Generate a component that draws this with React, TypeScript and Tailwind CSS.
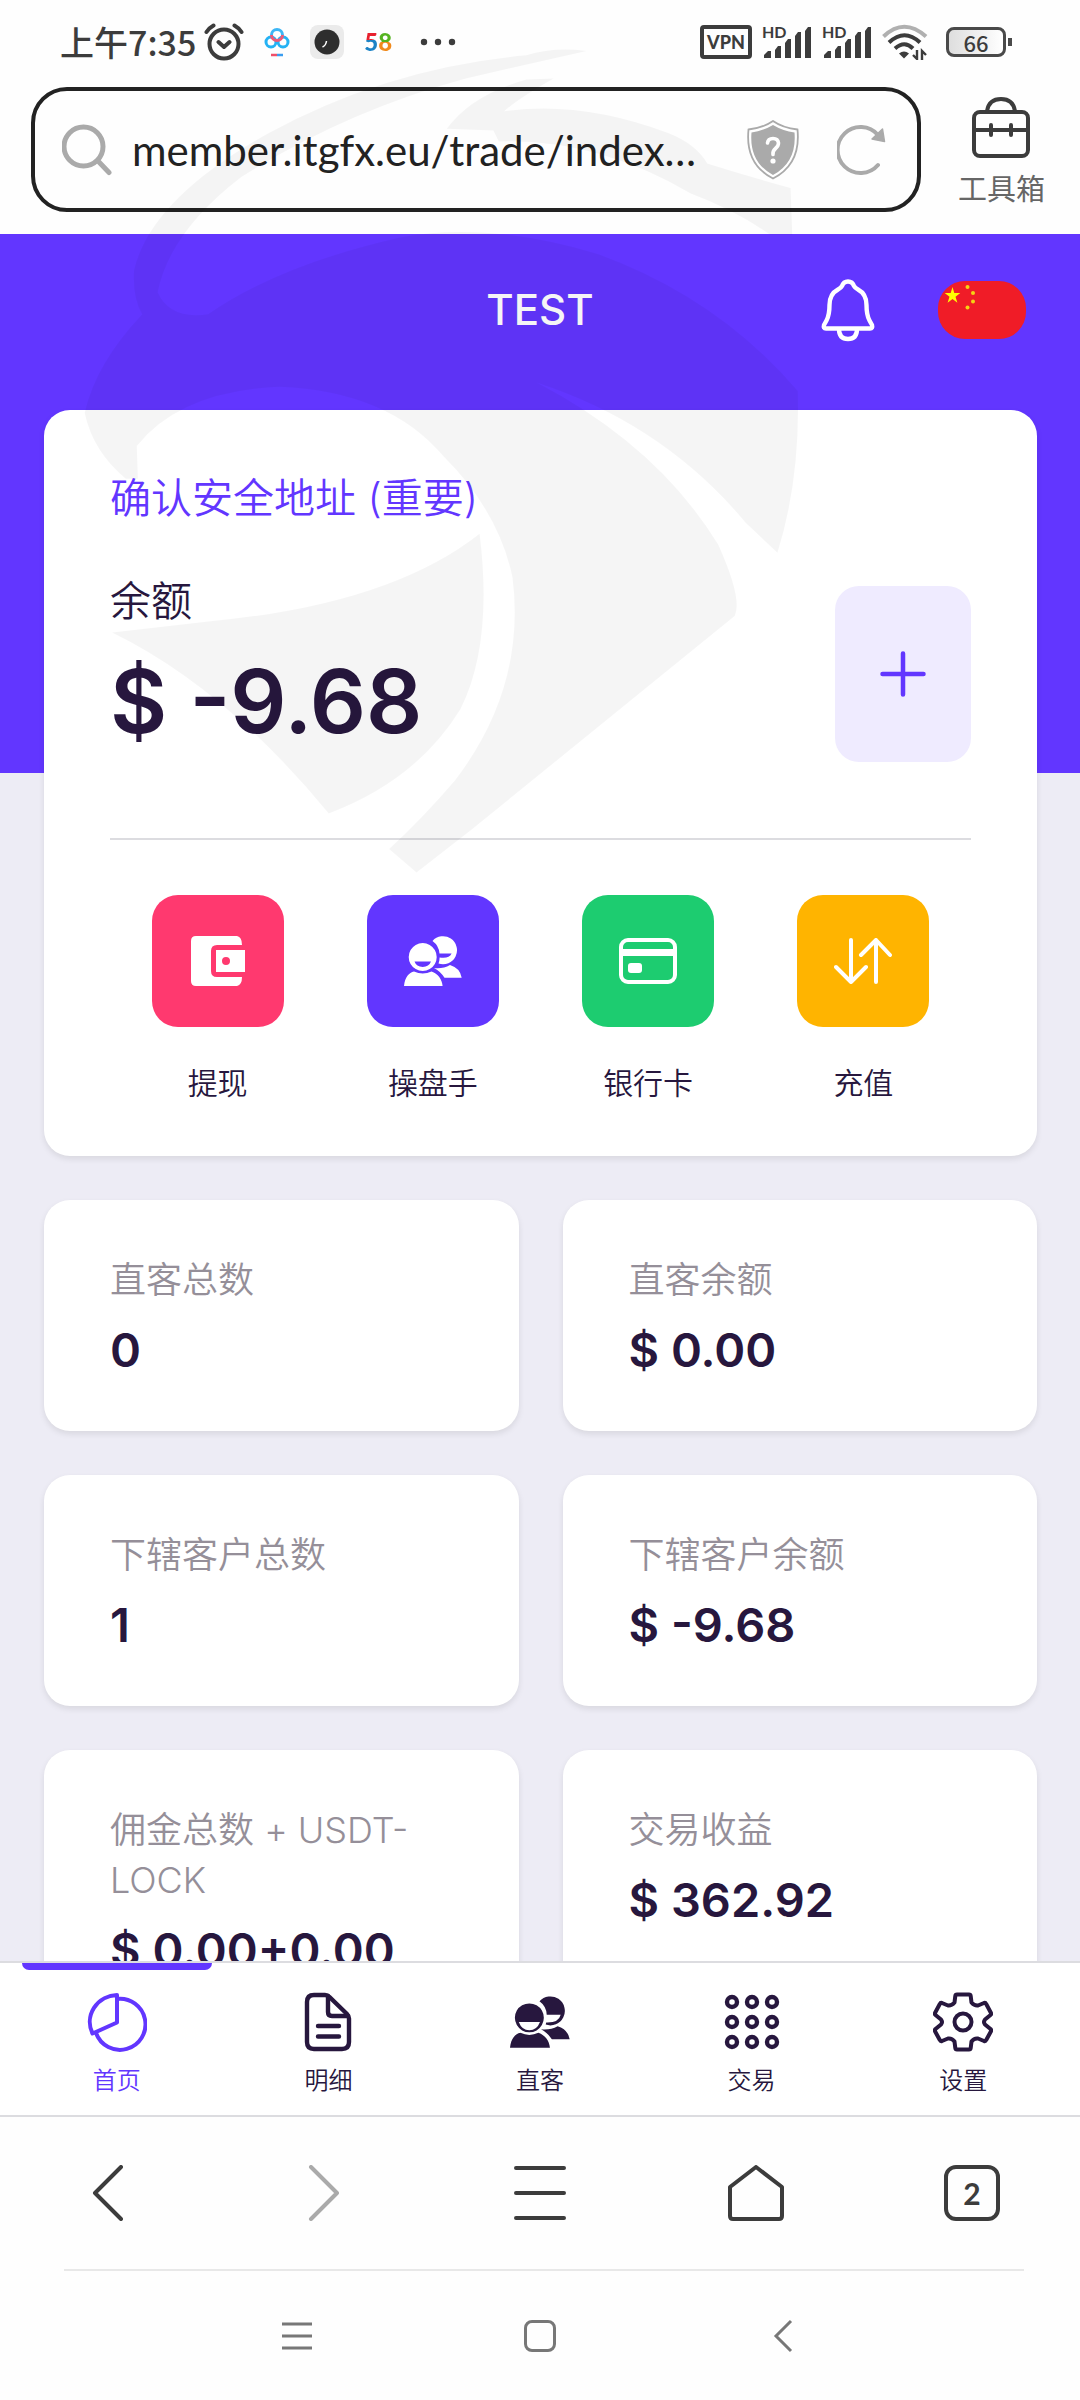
import React from 'react';

const CJK = "font-['Noto_Sans_CJK_SC',sans-serif]";
const LATIN = "font-['Inter','Noto_Sans_CJK_SC',sans-serif]";

interface IconProps {
  className?: string;
}

const Watermark: React.FC = () => (
  <svg viewBox="0 0 1080 900" className="absolute inset-x-0 top-0 w-full pointer-events-none" aria-hidden="true">
    <g transform="translate(60 40) scale(0.5485)" fill="#000" fillOpacity="0.038">
      <path d="M960 20Q900 12 850 28Q600 50 380 170Q165 290 135 420Q132 470 150 500Q65 590 45 680Q60 750 120 800L142 800L140 740Q220 640 400 632Q600 640 700 760Q800 860 825 980Q850 1180 720 1350Q660 1420 600 1475L650 1518L750 1440L1230 1050Q1245 1020 1200 920Q1090 740 870 625Q1100 700 1250 880L1308 935Q1350 800 1345 640Q1200 470 980 390Q780 330 620 360Q400 410 270 500Q200 510 178 460Q200 350 330 250Q520 130 740 70Z" />
      <path d="M850 72Q750 100 705 162L790 165L800 185Q980 180 1150 280Q1230 310 1295 355H1335L1332 270Q1260 250 1180 225Q1160 190 1110 170Q950 110 810 130Q830 110 900 70Z" />
      <path d="M95 1080L270 1060Q600 1030 765 900Q790 1100 730 1220Q650 1350 490 1410Q300 1180 95 1080Z" />
    </g>
  </svg>
);

const AlarmIcon: React.FC = () => (
  <svg viewBox="0 0 40 38" className="w-10 h-[38px]" fill="none" stroke="#3c3c3c" strokeWidth="4" strokeLinecap="round" strokeLinejoin="round">
    <circle cx="20" cy="21" r="14.5" />
    <path d="M14.5 19l5.5 5 5.5-5M2.5 9Q5 5 9.5 2.5M37.5 9Q35 5 30.5 2.5" />
  </svg>
);

const CloudAppIcon: React.FC = () => (
  <svg viewBox="0 0 26 30" className="w-[26px] h-[30px]" fill="none" strokeWidth="3">
    <circle cx="7" cy="15" r="5" stroke="#25b2f4" />
    <circle cx="19" cy="15" r="5" stroke="#25b2f4" />
    <path d="M7.5 8a5.5 5.5 0 0 1 11 0" stroke="#3cb6f5" />
    <path d="M7.5 8a5.5 5.5 0 0 0 11 0" stroke="#ee5a78" />
    <path d="M7 28h6" stroke="#f0506a" strokeWidth="2.5" />
    <path d="M13 28h6" stroke="#3a9df0" strokeWidth="2.5" />
  </svg>
);

const ClockAppIcon: React.FC = () => (
  <svg viewBox="0 0 34 34" className="w-[34px] h-[34px]">
    <rect width="34" height="34" rx="8" fill="#ebebeb" />
    <circle cx="17" cy="17" r="12.5" fill="#2e2e2e" />
    <path d="M12.5 22q3.5-1.5 4-6" fill="none" stroke="#fff" strokeWidth="1.5" />
  </svg>
);

const SignalIcon: React.FC = () => (
  <svg viewBox="0 0 50 38" className="w-[50px] h-[38px]" fill="#3c3c3c">
    <text x="0" y="15" fontSize="16" fontWeight="700" fontFamily="Lato, sans-serif">HD</text>
    <path d="M2 32l4-4h3v7H2zM13 27l3-4h3v12h-6zM23 20l3-4h3v19h-6zM33 13l3-4h3v26h-6zM43 8l3-4h3v31h-6z" />
  </svg>
);

const WifiIcon: React.FC = () => (
  <svg viewBox="0 0 46 36" className="w-[46px] h-9" fill="none" stroke="#3c3c3c" strokeWidth="4">
    <path d="M1.5 12.5Q22 -7 44 12.5" stroke="#b0b0b0" />
    <path d="M7 18.5Q22.5 4 38 18.5" />
    <path d="M13 24.5Q22.5 16 31 24.5" />
    <path d="M22 34.5l-5-5q5-4 10 0z" fill="#3c3c3c" stroke="none" />
    <path d="M35 26v9l-4-4M40 36v-9l4 4" strokeWidth="2.4" />
  </svg>
);

const ShieldIcon: React.FC = () => (
  <svg viewBox="0 0 52 60" className="w-[52px] h-[60px]">
    <path d="M26 1Q36 8 50.5 9.5Q54 44 26 58.5Q-2 44 1.5 9.5Q16 8 26 1Z" fill="#fff" stroke="#aaa" strokeWidth="1.8" />
    <path d="M26 5Q36 11 47.5 12.5Q50 42 26 55Q2 42 4.5 12.5Q16 11 26 5Z" fill="#aaa" />
    <path d="M20.5 23q.5-4.5 5.5-4.5t5.5 4.5q0 3-3 5.5t-2.5 6" fill="none" stroke="#fff" strokeWidth="3.6" strokeLinecap="round" />
    <circle cx="26" cy="41" r="2.6" fill="#fff" />
  </svg>
);

const RefreshIcon: React.FC = () => (
  <svg viewBox="0 0 50 52" className="w-[50px] h-[52px]">
    <path d="M41 41A23 23 0 1 1 41 11" fill="none" stroke="#aaa" strokeWidth="4" strokeLinecap="round" />
    <path d="M45.5 5L47.5 17.5L35 15Z" fill="#aaa" stroke="#aaa" strokeWidth="1.5" strokeLinejoin="round" />
  </svg>
);

const ToolboxIcon: React.FC = () => (
  <svg viewBox="0 0 58 62" className="w-[58px] h-[62px]" fill="none" stroke="#3c3c3c" strokeWidth="4" strokeLinecap="round">
    <rect x="2" y="15" width="54" height="44" rx="6" />
    <path d="M15 14Q17 2 29 2t14 12M3 33h52M19 28v10M39 28v10" />
  </svg>
);

const BellIcon: React.FC = () => (
  <svg viewBox="0 0 54 64" className="w-[54px] h-16" fill="none" stroke="#fff" strokeWidth="4.4" strokeLinejoin="round">
    <path d="M27 3.5Q31.5 3.5 33 8Q34 10 37 11.5Q45.5 16 45.5 27Q45.5 37 48.5 42.5L51 47Q52 50.5 49 50.5H5Q2 50.5 3 47L5.5 42.5Q8.5 37 8.5 27Q8.5 16 17 11.5Q20 10 21 8Q22.5 3.5 27 3.5Z" />
    <path d="M18 51Q18 61 27 61T36 51" />
  </svg>
);

const FlagIcon: React.FC = () => (
  <svg viewBox="0 0 88 58" className="w-[88px] h-[58px]">
    <rect width="88" height="58" rx="27" fill="#f01c27" />
    <path d="M14.5 6l1.8 6h6l-4.8 3.7 1.9 6.1-4.9-3.8-4.9 3.8 1.9-6.1-4.8-3.7h6z" fill="#ff0" />
    <g fill="#f5d313">
      <circle cx="29.5" cy="6" r="2" />
      <circle cx="35" cy="12" r="2" />
      <circle cx="35" cy="20.5" r="2" />
      <circle cx="29.5" cy="26.5" r="2" />
    </g>
  </svg>
);

const WalletIcon: React.FC = () => (
  <svg viewBox="0 0 54 50" className="w-[54px] h-[50px]" fill="#fff">
    <path d="M5 0H46Q51 1 51 9H26Q20 9 20 15V35Q20 41 26 41H51Q51 49 46 50H5Q0 50 0 45V5Q0 0 5 0Z" />
    <path fillRule="evenodd" d="M25 14H54V36H25ZM35 21a4 4 0 1 0 0 8a4 4 0 1 0 0-8Z" />
  </svg>
);

const PeopleIcon: React.FC<IconProps & { faces?: boolean }> = ({ className, faces }) => (
  <svg viewBox="0 0 58 50" className={className} fill="currentColor">
    <path
      fillRule="evenodd"
      d={
        faces
          ? 'M28.5 5A14 14 0 1 1 34.5 27.5A17 17 0 0 0 35 25.5Q47 26 49 18H35.5A17 17 0 0 0 28.5 5Z'
          : 'M28.5 5A14 14 0 1 1 34.5 27.5A17 17 0 0 0 35.6 21.5Q45 23 47.6 17.5H35.5A17 17 0 0 0 28.5 5Z'
      }
    />
    <path
      fillRule="evenodd"
      d={
        faces
          ? 'M18.7 7a14 14 0 1 0 .01 0ZM8.5 25H29Q26 33 18.7 33T8.5 25Z'
          : 'M18.7 7a14 14 0 1 0 .01 0ZM10.5 25.6H27Q25 31 18.7 31T10.5 25.6Z'
      }
    />
    <path d="M0 50C1 41 5 36.5 10 35.5Q18.7 39.5 27.5 35.5C34 38 38 43 38.6 50Z" />
    <path d="M30 32Q39 33 46 29Q56 32 57.7 41.7H40.5Q36 35 30 32Z" />
  </svg>
);

const CardIcon: React.FC = () => (
  <svg viewBox="0 0 58 46" className="w-[58px] h-[46px]">
    <rect x="2" y="2" width="54" height="42" rx="7" fill="none" stroke="#fff" strokeWidth="4" />
    <path d="M2 11H56V18H2Z" fill="#fff" />
    <rect x="9" y="25" width="14" height="10" rx="3" fill="#fff" />
  </svg>
);

const SwapIcon: React.FC = () => (
  <svg viewBox="0 0 58 46" className="w-[58px] h-[46px]" fill="none" stroke="#fff" strokeWidth="4" strokeLinecap="round" strokeLinejoin="round">
    <path d="M17 2V44M2 29L17 44L32 29M42 44V2M27 17L42 2L56 17" />
  </svg>
);

const PieIcon: React.FC<IconProps> = ({ className }) => (
  <svg viewBox="0 0 60 60" className={className} fill="none" stroke="currentColor" strokeWidth="4" strokeLinejoin="round">
    <path d="M30 3A28 27 0 0 0 5.5 41.5L30 30.5Z" />
    <path d="M30 7A25.5 25.5 0 1 1 9 41" />
  </svg>
);

const DocIcon: React.FC<IconProps> = ({ className }) => (
  <svg viewBox="0 0 60 60" className={className} fill="none" stroke="currentColor" strokeWidth="4.4" strokeLinejoin="round" strokeLinecap="round">
    <path d="M16 3H27Q29.5 3 31.5 5L49 22Q51 24 51 26.5V50Q51 57 44 57H16Q9 57 9 50V10Q9 3 16 3Z" />
    <path d="M30 4V20Q30 24 34 24H50M20 34H41M20 44.5H41" />
  </svg>
);

const GridIcon: React.FC<IconProps> = ({ className }) => (
  <svg viewBox="0 0 60 60" className={className} fill="none" stroke="currentColor" strokeWidth="4.4">
    {[10, 30, 50].map((y) => [10, 30, 50].map((x) => <circle key={`${x}-${y}`} cx={x} cy={y} r="5" />))}
  </svg>
);

const GearIcon: React.FC<IconProps> = ({ className }) => (
  <svg viewBox="0 0 60 60" className={className} fill="none" stroke="currentColor" strokeWidth="4" strokeLinejoin="round">
    <path d="M24 2.5H36Q37.5 2.5 37.7 4L38.5 10.5Q41.5 14 45 13.5L51 11Q52.5 10.5 53.2 12L58 21Q58.5 22.2 57.5 23L52 27.5Q50 30 52 32.5L57.5 37Q58.5 38 58 39.2L53.2 48Q52.5 49.5 51 49L45 46.5Q41 46 38.5 49.5L37.7 56Q37.5 57.5 36 57.5H24Q22.5 57.5 22.3 56L21.5 49.5Q19 46 15 46.5L9 49Q7.5 49.5 6.8 48L2 39.2Q1.5 38 2.5 37L8 32.5Q10 30 8 27.5L2.5 23Q1.5 22.2 2 21L6.8 12Q7.5 10.5 9 11L15 13.5Q18.5 14 21.5 10.5L22.3 4Q22.5 2.5 24 2.5Z" />
    <circle cx="30" cy="30" r="8.5" />
  </svg>
);

const StatusBar: React.FC = () => (
  <div className="flex items-center h-[87px] pl-[60px] pr-[68px] pb-1">
    <span className={`${CJK} text-[34px] leading-10 font-medium text-[#3c3c3c]`}>上午7:35</span>
    <div className="flex items-center gap-5 ml-2">
      <AlarmIcon />
      <CloudAppIcon />
      <ClockAppIcon />
      <span className="flex w-7 text-[24px] leading-8 font-['Lato',sans-serif] font-black text-transparent" aria-label="58">
        <span className="bg-linear-to-b from-[#e8202e] from-45% to-[#1c83c6] to-45% bg-clip-text">5</span>
        <span className="bg-linear-to-b from-[#54b320] from-50% to-[#f08a1c] to-50% bg-clip-text">8</span>
      </span>
      <svg viewBox="0 0 36 8" className="w-9 h-2 ml-2" fill="#3c3c3c">
        <circle cx="4" cy="4" r="3.2" />
        <circle cx="18" cy="4" r="3.2" />
        <circle cx="32" cy="4" r="3.2" />
      </svg>
    </div>
    <div className="flex items-center gap-[10px] ml-auto">
      <span className="flex items-center justify-center w-[52px] h-[34px] border-4 border-[#3c3c3c] rounded-sm text-[18px] leading-6 font-['Lato',sans-serif] font-black text-[#3c3c3c]">VPN</span>
      <SignalIcon />
      <SignalIcon />
      <WifiIcon />
      <span className="flex items-center ml-2">
        <span className={`${CJK} flex items-center justify-center w-[60px] h-[30px] border-[3px] border-[#4a4a4a] rounded-lg bg-linear-to-r from-[#dedede] to-white text-[22px] leading-6 font-medium text-[#3c3c3c]`}>66</span>
        <span className="w-1 h-2 ml-0.5 bg-[#4a4a4a]" />
      </span>
    </div>
  </div>
);

const AddressBar: React.FC = () => (
  <div className="flex items-center pl-[31px] pr-[35px] pb-[22px]">
    <label className="flex items-center flex-1 min-w-0 h-[125px] pl-[27px] pr-[30px] border-4 border-[#222] rounded-[36px]">
      <svg viewBox="0 0 50 52" className="w-[50px] h-[52px] shrink-0" fill="none" stroke="#aaa" strokeLinecap="round">
        <circle cx="21.5" cy="22.5" r="19.5" strokeWidth="5" />
        <path d="M36 37L47 48.5" strokeWidth="5" />
      </svg>
      <input
        type="text"
        aria-label="网址"
        readOnly
        defaultValue="member.itgfx.eu/trade/index…"
        className="flex-1 min-w-0 ml-5 font-['Lato',sans-serif] text-[42px] leading-[56px] text-[#222] bg-transparent outline-none"
      />
      <ShieldIcon />
      <button type="button" aria-label="刷新" className="ml-[38px]">
        <RefreshIcon />
      </button>
    </label>
    <button type="button" className="flex flex-col items-center ml-[37px] pt-1">
      <ToolboxIcon />
      <span className={`${CJK} mt-2 text-[29px] leading-10 text-[#666]`}>工具箱</span>
    </button>
  </div>
);

const actions = [
  { label: '提现', color: 'bg-[#ff396f]', icon: <WalletIcon /> },
  { label: '操盘手', color: 'bg-[#6236ff]', icon: <PeopleIcon className="w-[58px] h-[50px] text-white" /> },
  { label: '银行卡', color: 'bg-[#1dcc70]', icon: <CardIcon /> },
  { label: '充值', color: 'bg-[#ffb400]', icon: <SwapIcon /> },
];

const stats = [
  { label: '直客总数', value: '0' },
  { label: '直客余额', value: '$ 0.00' },
  { label: '下辖客户总数', value: '1' },
  { label: '下辖客户余额', value: '$ -9.68' },
  { label: '佣金总数 + USDT-LOCK', value: '$ 0.00+0.00' },
  { label: '交易收益', value: '$ 362.92' },
];

const tabs = [
  { label: '首页', Icon: PieIcon, active: true },
  { label: '明细', Icon: DocIcon },
  { label: '直客', Icon: (p: IconProps) => <PeopleIcon {...p} faces /> },
  { label: '交易', Icon: GridIcon },
  { label: '设置', Icon: GearIcon },
];

const BalanceCard: React.FC = () => (
  <section className="bg-white rounded-[26px] shadow-[0_3px_6px_rgba(0,0,0,0.09)] px-[66px] pt-[58px] pb-[55px]">
    <a href="#address" className={`${LATIN} block text-[41px] leading-[60px] font-[350] text-[#6236ff]`}>确认安全地址 (重要)</a>
    <div className="flex items-end justify-between mt-10">
      <div>
        <p className={`${CJK} text-[41px] leading-[60px] font-[350] text-[#27173e]`}>余额</p>
        <p className={`${LATIN} mt-4 pb-1 text-[88px] leading-[114px] font-semibold text-[#27173e]`}>$ -9.68</p>
      </div>
      <button type="button" aria-label="添加" className="flex items-center justify-center w-[136px] h-[176px] rounded-3xl bg-[#efebff]">
        <svg viewBox="0 0 46 46" className="w-[46px] h-[46px]" stroke="#6236ff" strokeWidth="4.5" strokeLinecap="round">
          <path d="M23 2.5V43.5M2.5 23H43.5" />
        </svg>
      </button>
    </div>
    <div className="grid grid-cols-4 mt-[76px] pt-[55px] border-t-2 border-[#dcdce0]">
      {actions.map((a) => (
        <button key={a.label} type="button" className="flex flex-col items-center">
          <span className={`flex items-center justify-center w-[132px] h-[132px] rounded-[26px] ${a.color}`}>{a.icon}</span>
          <span className={`${CJK} mt-[34px] text-[30px] leading-10 font-[350] text-[#27173e]`}>{a.label}</span>
        </button>
      ))}
    </div>
  </section>
);

const App: React.FC = () => {
  return (
    <div className="relative flex flex-col h-screen bg-[#fefefe] overflow-hidden">
      <StatusBar />
      <AddressBar />

      <main className="flex-1 min-h-0 overflow-hidden bg-[linear-gradient(#6236ff_539px,#edecf5_539px)]">
        <header className="grid grid-cols-[1fr_auto_1fr] items-center h-[152px] mb-6">
          <span />
          <h1 className={`${LATIN} text-[42px] leading-[60px] font-medium text-white`}>TEST</h1>
          <div className="flex items-center justify-end gap-[63px] pr-[54px]">
            <button type="button" aria-label="通知"><BellIcon /></button>
            <button type="button" aria-label="中文"><FlagIcon /></button>
          </div>
        </header>

        <div className="pl-11 pr-[43px]">
          <BalanceCard />
          <div className="grid grid-cols-2 gap-11 mt-11">
            {stats.map((s) => (
              <div key={s.label} className="bg-white rounded-[26px] shadow-[0_3px_6px_rgba(0,0,0,0.09)] px-[66px] pt-[55px] pb-[51px]">
                <p className={`${LATIN} text-[36px] leading-[50px] font-[350] text-[#958f99]`}>{s.label}</p>
                <p className={`${LATIN} mt-[15px] text-[47px] leading-[60px] font-semibold text-[#27173e] whitespace-nowrap`}>{s.value}</p>
              </div>
            ))}
          </div>
        </div>
      </main>

      <nav className="grid grid-cols-5 h-[156px] px-[11px] border-y-2 border-[#dcdce0] bg-white">
        {tabs.map(({ label, Icon, active }) => (
          <a
            key={label}
            href="#tab"
            className={`relative flex flex-col items-center pt-[29px] ${active ? 'text-[#6236ff]' : 'text-[#27173e]'}`}
          >
            {active && <span className="absolute top-0 inset-x-[11px] h-[7px] rounded-b-lg bg-[#6236ff]" />}
            <Icon className="w-[60px] h-[60px]" />
            <span className={`${CJK} mt-[7px] text-[24px] leading-10 font-[350]`}>{label}</span>
          </a>
        ))}
      </nav>

      <div className="grid grid-cols-5 justify-items-center items-center h-[152px]">
        <button type="button" aria-label="后退">
          <svg viewBox="0 0 32 56" className="w-8 h-14" fill="none" stroke="#3c3c3c" strokeWidth="4" strokeLinecap="round" strokeLinejoin="round">
            <path d="M29 2L3 28L29 54" />
          </svg>
        </button>
        <button type="button" aria-label="前进">
          <svg viewBox="0 0 32 56" className="w-8 h-14" fill="none" stroke="#aaa" strokeWidth="4" strokeLinecap="round" strokeLinejoin="round">
            <path d="M3 2L29 28L3 54" />
          </svg>
        </button>
        <button type="button" aria-label="菜单">
          <svg viewBox="0 0 52 56" className="w-[52px] h-14" stroke="#3c3c3c" strokeWidth="4" strokeLinecap="round">
            <path d="M2 3H50M2 28H50M2 53H50" />
          </svg>
        </button>
        <button type="button" aria-label="主页">
          <svg viewBox="0 0 56 56" className="w-14 h-14" fill="none" stroke="#3c3c3c" strokeWidth="4" strokeLinejoin="round">
            <path d="M28 2L54 22V51Q54 54 51 54H5Q2 54 2 51V22Z" />
          </svg>
        </button>
        <button type="button" aria-label="标签页" className="flex items-center justify-center w-14 h-14 border-4 border-[#3c3c3c] rounded-xl font-['Lato',sans-serif] text-[30px] leading-10 font-bold text-[#3c3c3c]">
          2
        </button>
      </div>

      <div className="ml-16 mr-14 border-t-2 border-[#e8e8e8]" />

      <div className="grid grid-cols-3 justify-items-center items-center h-[129px] px-[175px]">
        <button type="button" aria-label="最近任务">
          <svg viewBox="0 0 32 32" className="w-8 h-8" stroke="#777" strokeWidth="3">
            <path d="M1 4H31M1 16H31M1 28H31" />
          </svg>
        </button>
        <button type="button" aria-label="桌面" className="w-8 h-8 border-[3px] border-[#777] rounded-lg" />
        <button type="button" aria-label="返回">
          <svg viewBox="0 0 20 34" className="w-5 h-[34px]" fill="none" stroke="#777" strokeWidth="3">
            <path d="M18 2L3 17L18 32" />
          </svg>
        </button>
      </div>

      <Watermark />
    </div>
  );
};

export default App;
